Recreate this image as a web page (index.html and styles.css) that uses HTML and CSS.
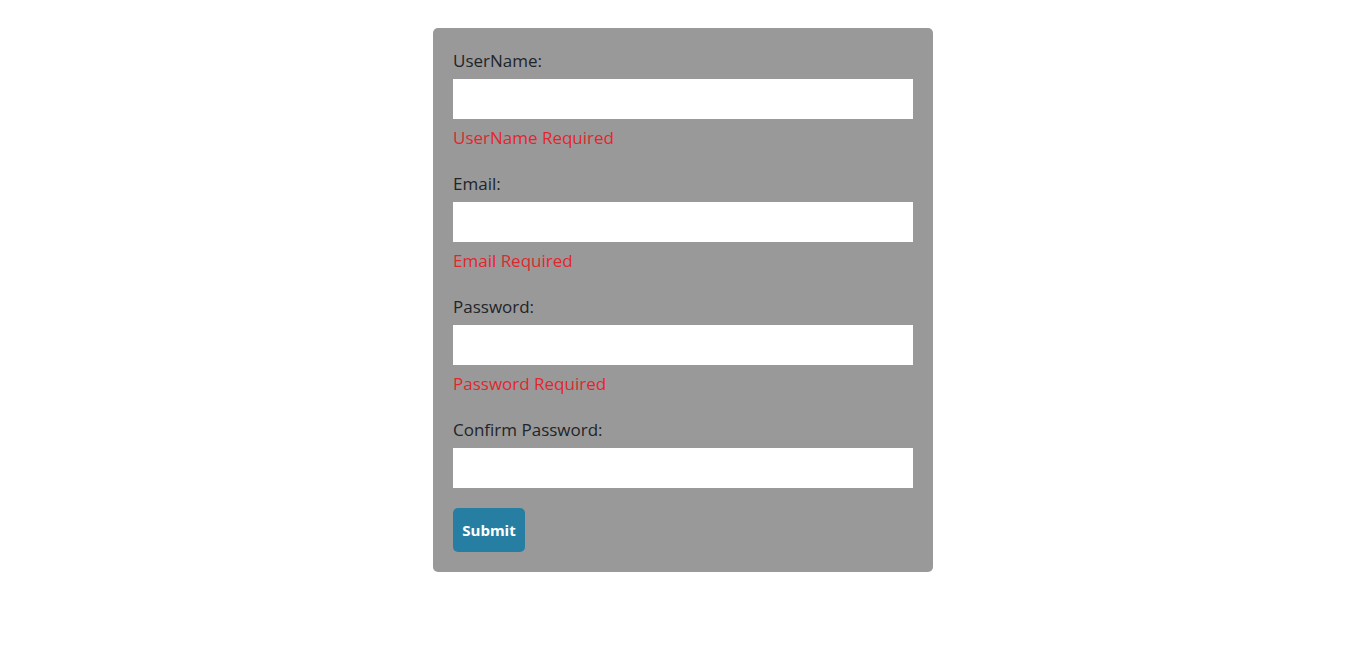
FILE: index.html
```html
<!DOCTYPE html>
<html>
<head>
<meta charset="utf-8">
<link rel="stylesheet" href="styles.css">
</head>
<body>
<form class="card">
  <div class="field">
    <label class="label">UserName:</label>
    <input class="input" type="text">
    <div class="error">UserName Required</div>
  </div>
  <div class="field">
    <label class="label">Email:</label>
    <input class="input" type="text">
    <div class="error">Email Required</div>
  </div>
  <div class="field">
    <label class="label">Password:</label>
    <input class="input" type="password">
    <div class="error">Password Required</div>
  </div>
  <div class="field last">
    <label class="label">Confirm Password:</label>
    <input class="input" type="password">
  </div>
  <button class="submit" type="button">Submit</button>
</form>
</body>
</html>
```
FILE: styles.css
```css
* { box-sizing: border-box; }
body {
  margin: 0;
  background: #fff;
  font-family: "Open Sans", "Noto Sans", sans-serif;
  color: #212529;
}
.card {
  width: 500px;
  margin: 28px auto 0;
  background: #999999;
  border-radius: 5px;
  padding: 20px;
  display: flex;
  flex-direction: column;
  align-items: flex-start;
}
.field {
  display: flex;
  flex-direction: column;
  width: 100%;
  margin-bottom: 20px;
}
.field.last { margin-bottom: 20px; }
.label {
  font-size: 17px;
  font-weight: 500;
  line-height: 26px;
  margin-bottom: 5px;
}
.input {
  width: 100%;
  height: 40px;
  border: none;
  background: #fff;
  margin: 0;
  padding: 0 8px;
  outline: none;
}
.error {
  color: #e3262e;
  font-size: 17px;
  line-height: 26px;
  margin-top: 6px;
}
.submit {
  background: #267fa2;
  color: #fff;
  border: none;
  border-radius: 5px;
  height: 44px;
  width: 72px;
  font-family: inherit;
  font-size: 15px;
  font-weight: 700;
  padding: 0;
}
```
